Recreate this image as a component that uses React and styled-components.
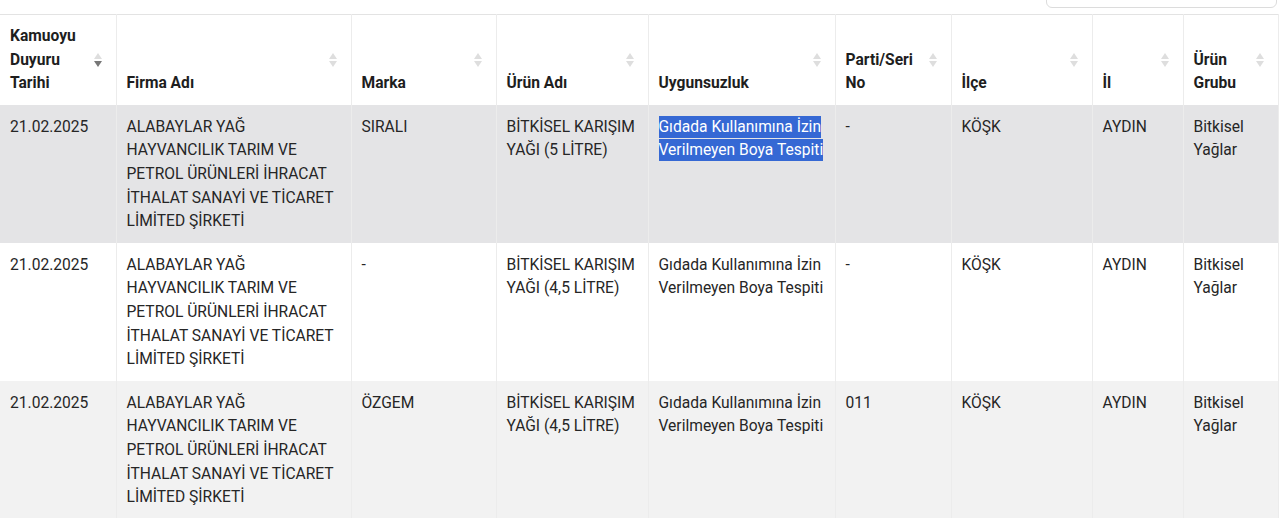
import React from "react";
import styled, { createGlobalStyle } from "styled-components";

const Global = createGlobalStyle`
  html, body { margin: 0; padding: 0; background: #fff; }
  body { font-family: Roboto, "Noto Sans", "Liberation Sans", sans-serif; color: #212529; overflow: hidden; }
`;

const Page = styled.div`
  width: 1280px;
  display: flex;
  flex-direction: column;
`;

const TopBar = styled.div`
  height: 14px;
  display: flex;
  justify-content: flex-end;
  padding-right: 3px;
`;

const Search = styled.div`
  width: 229px;
  height: 30px;
  margin-top: -24px;
  border: 1px solid #dcdcdc;
  border-radius: 6px;
  background: #fff;
`;

const Table = styled.table`
  width: 1278px;
  border-collapse: collapse;
  table-layout: fixed;
  border-top: 1px solid #e3e3e3;
  font-size: 15.6px;
  line-height: 23.6px;
`;

const Th = styled.th`
  position: relative;
  height: 89px;
  box-sizing: border-box;
  text-align: left;
  vertical-align: bottom;
  font-weight: 700;
  padding: 10px 28px 9px 10px;
  border-left: ${(p) => (p.$first ? "none" : "1px solid #ececec")};
  border-right: 1px solid #ececec;
  color: #1e1e1e;
`;

const SortIcon = styled.span`
  position: absolute;
  right: 14px;
  top: 50%;
  transform: translateY(-50%);
  display: flex;
  flex-direction: column;
  align-items: center;
  gap: 2px;
`;

const Tri = styled.span`
  width: 0;
  height: 0;
  border-left: 4px solid transparent;
  border-right: 4px solid transparent;
  ${(p) =>
    p.$up
      ? `border-bottom: 6px solid ${p.$active ? "#777" : "#dedede"};`
      : `border-top: 6px solid ${p.$active ? "#777" : "#dedede"};`}
`;

const Tr = styled.tr`
  height: 138px;
  background: ${(p) => p.$bg};
`;

const Td = styled.td`
  box-sizing: border-box;
  vertical-align: top;
  padding: 11px 8px 9px 10px;
  border-left: ${(p) => (p.$first ? "none" : "1px solid #ececec")};
  border-right: 1px solid #ececec;
  color: #262626;
`;

const Selected = styled.span`
  background: #3568d4;
  color: #fff;
  padding: 2px 0;
`;

const columns = [
  { label: "Kamuoyu Duyuru Tarihi", width: 116, active: true },
  { label: "Firma Adı", width: 235 },
  { label: "Marka", width: 145 },
  { label: "Ürün Adı", width: 152 },
  { label: "Uygunsuzluk", width: 187 },
  { label: "Parti/Seri No", width: 116 },
  { label: "İlçe", width: 141 },
  { label: "İl", width: 91 },
  { label: "Ürün Grubu", width: 95 },
];

const firma =
  "ALABAYLAR YAĞ HAYVANCILIK TARIM VE PETROL ÜRÜNLERİ İHRACAT İTHALAT SANAYİ VE TİCARET LİMİTED ŞİRKETİ";
const uyg = "Gıdada Kullanımına İzin Verilmeyen Boya Tespiti";

const rows = [
  { bg: "#e4e4e6", marka: "SIRALI", urun: "BİTKİSEL KARIŞIM YAĞI (5 LİTRE)", parti: "-", selected: true },
  { bg: "#ffffff", marka: "-", urun: "BİTKİSEL KARIŞIM YAĞI (4,5 LİTRE)", parti: "-" },
  { bg: "#f2f2f2", marka: "ÖZGEM", urun: "BİTKİSEL KARIŞIM YAĞI (4,5 LİTRE)", parti: "011" },
];

export default function App() {
  return (
    <Page>
      <Global />
      <TopBar>
        <Search />
      </TopBar>
      <Table>
        <colgroup>
          {columns.map((c) => (
            <col key={c.label} style={{ width: c.width }} />
          ))}
        </colgroup>
        <thead>
          <tr>
            {columns.map((c, i) => (
              <Th key={c.label} $first={i === 0}>
                {c.label}
                <SortIcon>
                  <Tri $up />
                  <Tri $active={c.active} />
                </SortIcon>
              </Th>
            ))}
          </tr>
        </thead>
        <tbody>
          {rows.map((r, i) => (
            <Tr key={i} $bg={r.bg}>
              <Td $first>21.02.2025</Td>
              <Td>{firma}</Td>
              <Td>{r.marka}</Td>
              <Td>{r.urun}</Td>
              <Td>
                {r.selected ? (
                  <Selected>
                    Gıdada Kullanımına İzin
                    <br />
                    Verilmeyen Boya Tespiti
                  </Selected>
                ) : (
                  uyg
                )}
              </Td>
              <Td>{r.parti}</Td>
              <Td>KÖŞK</Td>
              <Td>AYDIN</Td>
              <Td>Bitkisel Yağlar</Td>
            </Tr>
          ))}
        </tbody>
      </Table>
    </Page>
  );
}
